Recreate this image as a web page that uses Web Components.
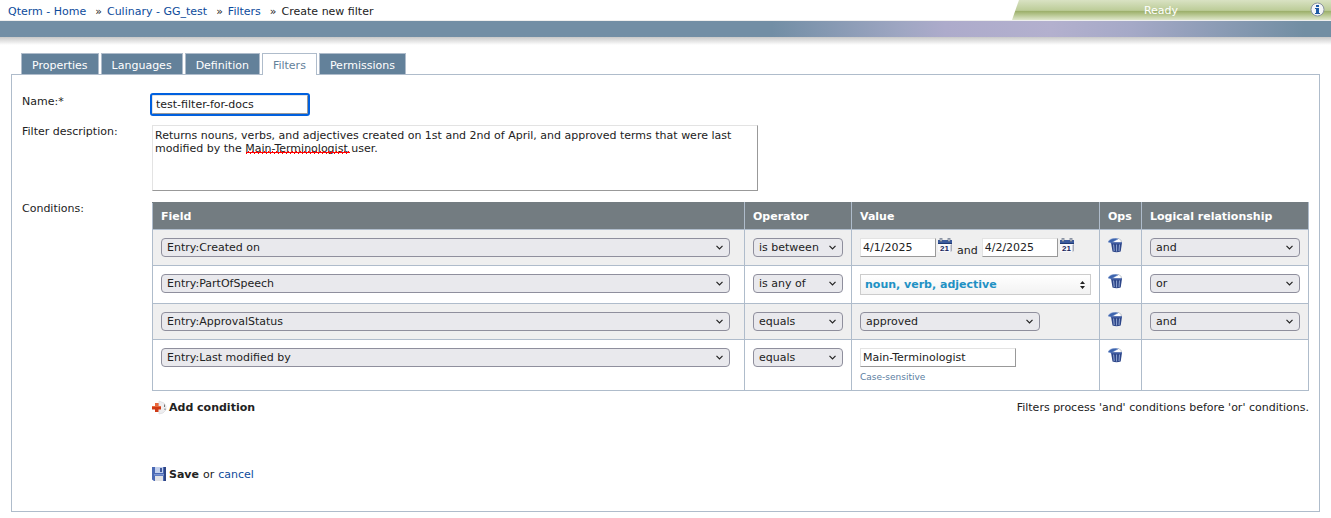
<!DOCTYPE html>
<html lang="en">
<head>
<meta charset="utf-8">
<title>Qterm - Create new filter</title>
<style>
  body {
    margin: 0;
    background: #fff;
    color: #222;
    font: 11px/13px "DejaVu Sans", Verdana, sans-serif;
  }
  main {
    padding: 8px 11px 0;
  }
</style>
</head>
<body>
<page-header>
  <a slot="crumb" href="#home">Qterm - Home</a>
  <a slot="crumb" href="#termbase">Culinary - GG_test</a>
  <a slot="crumb" href="#filters">Filters</a>
  <span slot="crumb">Create new filter</span>
  <span slot="status">Ready</span>
</page-header>
<main>
  <tab-panel>
    <tab-link slot="tab">Properties</tab-link>
    <tab-link slot="tab">Languages</tab-link>
    <tab-link slot="tab">Definition</tab-link>
    <tab-link slot="tab" selected>Filters</tab-link>
    <tab-link slot="tab">Permissions</tab-link>
    <filter-form></filter-form>
  </tab-panel>
</main>

<script>
const ICONS = {
  trash: `
    <path d="M4.500 4.500 L7 1.500 L11 .500 L13 2.500 L13.500 5 Z" fill="#fff" stroke="#9aa3b2" stroke-width=".7"/>
    <path d="M0 4 C1 1.500 4 .200 8 .200 L10 1 L3 5 Z" fill="#3d64ad" stroke="#7f9ad0" stroke-width=".5"/>
    <path d="M3 4.600 H14 L12.700 13.500 Q8.500 15 4.500 13.500 Z" fill="#2c4588"/>
    <path d="M3.200 5 H13.800" stroke="#4a6bb4" stroke-width="1"/>
    <path d="M5.600 6.500 L6.200 13 M8.600 6.500 V13.500 M11.500 6.500 L11 13" stroke="#9fb2da" stroke-width=".9"/>`,
  calendar: `
    <path d="M0 2 H14 V6 H0 Z" fill="#3a5a9e"/>
    <path d="M0 5 H14 V6 H0 Z" fill="#203a74"/>
    <path d="M2 0 H4 V3.500 H2 Z M10 0 H12 V3.500 H10 Z" fill="#c4c8d0" stroke="#526077" stroke-width=".6"/>
    <path d="M0 6 H14 L13 14 H0 Z" fill="#f8f8fb"/>
    <path d="M12.500 7 L14 6 V13 L12.500 14 Z" fill="#a9adba"/>
    <text x="2" y="13" font-size="8" font-weight="bold" fill="#16245a">21</text>`,
  add: `
    <path d="M7 1 L12 3 L14 6 V10 L11 13 L7 14 Z" fill="#eeeef0" stroke="#d5d5d8" stroke-width=".6"/>
    <path d="M12.500 4.500 V7 M13 8.500 V10" stroke="#777" stroke-width="1"/>
    <path d="M3 3 H6.500 V6 H9 V9.500 H6.500 V12 H3 V9.500 H0 V6 H3 Z" fill="#cf3a16"/>
    <path d="M3 3 H6 V6 H9 V7 H0 V6 H3 Z" fill="#e8683c"/>`,
  save: `
    <path d="M0 0 H14 V14 H2 L0 12.500 Z" fill="#4a69b4"/>
    <path d="M12 0 H14 V14 H12 Z" fill="#2e4584"/>
    <path d="M3 0 H11 V6 H3 Z" fill="#c3d0ec"/>
    <path d="M8 1 H10 V5 H8 Z" fill="#41599b"/>
    <path d="M2 7 H12 V8.500 H2 Z" fill="#7e97d2"/>
    <path d="M3 9 H11 V14 H3 Z" fill="#e4e4e6"/>`,
  info: `
    <circle cx="7.500" cy="7.500" r="6.500" fill="#f4f5f7" stroke="#8a94a0" stroke-width="1"/>
    <path d="M6 3 H9 V5 H6 Z M5 6 H9 V11 H10 V12 H5 V11 H6 V7 H5 Z" fill="#1f5aa5"/>`,
};

function attach(element, css, html) {
  const root = element.attachShadow({ mode: "open" });
  root.innerHTML = `<style>* { box-sizing: border-box; } ${css}</style>${html}`;
  return root;
}

class GlyphIcon extends HTMLElement {
  constructor() {
    super();
    attach(this, `
      :host { display: inline-block; width: 15px; height: 15px; flex: none; }
      svg { display: block; }
    `, `<svg width="15" height="15" viewBox="0 0 15 15" aria-hidden="true"></svg>`);
  }

  connectedCallback() {
    this.shadowRoot.querySelector("svg").innerHTML = ICONS[this.getAttribute("name")];
  }
}

class PageHeader extends HTMLElement {
  constructor() {
    super();
    attach(this, `
      :host { display: block; }
      .top { display: flex; justify-content: space-between; height: 20px; }
      nav { display: flex; padding: 5px 8px 0; gap: 9px; }
      ::slotted(a) { color: #0d4b9b; text-decoration: none; }
      ::slotted([slot="crumb"]:not(:first-child))::before {
        content: "»";
        color: #222;
        margin-right: 5px;
      }
      .status {
        display: grid;
        grid-template-columns: 1fr auto;
        align-items: center;
        width: 319px;
        padding: 1px 6px 0 0;
        color: #fff;
        text-align: center;
        clip-path: polygon(7px 0, 100% 0, 100% 100%, 0 100%);
        background: linear-gradient(#d9e2c3, #bccc98 52%, #9caf6b 56%, #a9bb7c 65%, #dfe7cc);
      }
      button { display: block; padding: 0; border: 0; background: none; }
      .bar {
        height: 17px;
        border-top: 1px solid #eee;
        background: linear-gradient(90deg, #728ea5 58%, #a0a7c3 68%, #adabcb 71%, #b3b0ce 79%, #a5a9c7 85%, #728ea3 98%);
      }
      .shade { height: 8px; background: linear-gradient(#c8c8c8, #fff); }
    `, `
      <div class="top">
        <nav aria-label="Breadcrumb"><slot name="crumb"></slot></nav>
        <div class="status">
          <slot name="status"></slot>
          <button type="button" aria-label="Information"><glyph-icon name="info"></glyph-icon></button>
        </div>
      </div>
      <div class="bar"></div>
      <div class="shade"></div>
    `);
  }
}

class TabLink extends HTMLElement {
  constructor() {
    super();
    attach(this, `
      :host { display: block; }
      a {
        display: block;
        height: 21px;
        padding: 5px 10px 0;
        border: 1px solid #afbccb;
        border-bottom: 0;
        background: #63819a;
        color: #fff;
        text-decoration: none;
      }
      :host([selected]) a {
        height: 22px;
        background: #fff;
        color: #63819a;
      }
    `, `<a href="#tab"><slot></slot></a>`);
  }
}

class TabPanel extends HTMLElement {
  constructor() {
    super();
    attach(this, `
      :host { display: block; }
      nav {
        position: relative;
        display: flex;
        gap: 2px;
        height: 21px;
        padding-left: 10px;
      }
      section {
        min-height: 437px;
        padding: 18px 10px 29px;
        border: 1px solid #afbccb;
      }
    `, `
      <nav><slot name="tab"></slot></nav>
      <section><slot></slot></section>
    `);
  }
}

class DropDown extends HTMLElement {
  constructor() {
    super();
    attach(this, `
      :host { display: block; position: relative; }
      select {
        display: block;
        appearance: none;
        width: 100%;
        height: 19px;
        padding: 0 20px 0 5px;
        border: 1px solid #8f8f9d;
        border-radius: 4px;
        background: #e9e9ed;
        color: #222;
        font: inherit;
      }
      svg { position: absolute; top: 7px; right: 7px; pointer-events: none; }
    `, `
      <select></select>
      <svg width="7" height="5" viewBox="0 0 7 5" aria-hidden="true">
        <path d="M.500 .800 L3.500 3.800 L6.500 .800" fill="none" stroke="#222" stroke-width="1.200"/>
      </svg>
    `);
  }

  connectedCallback() {
    const select = this.shadowRoot.querySelector("select");
    select.setAttribute("aria-label", this.getAttribute("label"));
    select.add(new Option(this.getAttribute("value")));
  }
}

class TextBox extends HTMLElement {
  constructor() {
    super();
    attach(this, `
      :host { display: block; width: 156px; }
      input {
        display: block;
        width: 100%;
        height: 19px;
        padding: 0 2px;
        border: 1px solid;
        border-color: #e3e3e3 #999 #999 #e3e3e3;
        border-radius: 0;
        background: #fff;
        color: #222;
        font: inherit;
      }
    `, `<input type="text">`);
  }

  connectedCallback() {
    const input = this.shadowRoot.querySelector("input");
    input.setAttribute("aria-label", this.getAttribute("label"));
    input.value = this.getAttribute("value");
  }
}

class DateRange extends HTMLElement {
  constructor() {
    super();
    attach(this, `
      :host { display: flex; }
      text-box { width: 76px; }
      button { display: block; height: 15px; padding: 0; border: 0; background: none; margin: 0 2px; }
      span { padding: 6px 4px 0 2px; line-height: 13px; }
    `, `
      <text-box label="From date" value="4/1/2025"></text-box>
      <button type="button" aria-label="Pick from date"><glyph-icon name="calendar"></glyph-icon></button>
      <span>and</span>
      <text-box label="To date" value="4/2/2025"></text-box>
      <button type="button" aria-label="Pick to date"><glyph-icon name="calendar"></glyph-icon></button>
    `);
  }
}

class MultiPick extends HTMLElement {
  constructor() {
    super();
    attach(this, `
      :host { display: block; }
      button {
        display: flex;
        align-items: center;
        justify-content: space-between;
        width: 100%;
        height: 21px;
        padding: 0 4px;
        border: 1px solid #ccc;
        background: linear-gradient(#fff, #f2f2f2);
        color: #2191c4;
        font: inherit;
        font-weight: bold;
      }
    `, `
      <button type="button" aria-haspopup="listbox">
        <slot></slot>
        <svg width="7" height="8" viewBox="0 0 7 8" aria-hidden="true">
          <path d="M1 3 L3.500 0 L6 3 Z M1 5 L3.500 8 L6 5 Z" fill="#222"/>
        </svg>
      </button>
    `);
  }
}

class ConditionTable extends HTMLElement {
  constructor() {
    super();
    const rows = [
      ["Entry:Created on", "is between", `<date-range></date-range>`, "and"],
      ["Entry:PartOfSpeech", "is any of", `<multi-pick>noun, verb, adjective</multi-pick>`, "or"],
      ["Entry:ApprovalStatus", "equals", `<drop-down class="status" label="Value" value="approved"></drop-down>`, "and"],
      ["Entry:Last modified by", "equals", `<text-box label="Value" value="Main-Terminologist"></text-box><small>Case-sensitive</small>`, ""],
    ];
    attach(this, `
      :host { display: block; }
      table { width: 100%; border-collapse: collapse; table-layout: fixed; }
      th, td { padding: 8px; border: 1px solid #afbccb; text-align: left; vertical-align: top; }
      th { padding: 7px 8px 6px; background: #737c81; color: #fff; border-top-color: #737c81; }
      tbody tr:nth-child(odd) { background: #efefef; }
      .field { width: auto; }
      .operator { width: 107px; }
      .value { width: 248px; }
      .ops { width: 42px; }
      .logic { width: 167px; }
      td:first-child { padding-right: 14px; }
      .status { width: 180px; }
      small { display: block; margin-top: 6px; font-size: 9px; line-height: 9px; color: #5c80a2; }
      button { display: block; padding: 0; border: 0; background: none; }
    `, `
      <table>
        <thead>
          <tr>
            <th class="field">Field</th>
            <th class="operator">Operator</th>
            <th class="value">Value</th>
            <th class="ops">Ops</th>
            <th class="logic">Logical relationship</th>
          </tr>
        </thead>
        <tbody>
          ${rows.map(([field, operator, value, logic]) => `
            <tr>
              <td><drop-down label="Field" value="${field}"></drop-down></td>
              <td><drop-down label="Operator" value="${operator}"></drop-down></td>
              <td>${value}</td>
              <td><button type="button" aria-label="Delete condition"><glyph-icon name="trash"></glyph-icon></button></td>
              <td>${logic && `<drop-down label="Logical relationship" value="${logic}"></drop-down>`}</td>
            </tr>`).join("")}
        </tbody>
      </table>
    `);
  }
}

class FilterForm extends HTMLElement {
  constructor() {
    super();
    attach(this, `
      :host { display: block; }
      form { display: grid; grid-template-columns: 130px minmax(0, 1fr); }
      label[for="name"] { padding-top: 2px; }
      input, textarea {
        display: block;
        border: 1px solid;
        border-color: #e3e3e3 #999 #999 #e3e3e3;
        border-radius: 0;
        background: #fff;
        color: #222;
        font: inherit;
      }
      input {
        width: 156px;
        height: 19px;
        margin: 2px 0 11px;
        padding: 0 3px;
        outline: 2px solid #0060df;
        border-radius: 1px;
      }
      .description { position: relative; width: 606px; margin-bottom: 11px; }
      textarea { width: 100%; height: 66px; padding: 3px 2px; resize: none; overflow: hidden; }
      .squiggle { position: absolute; left: 94px; top: 26px; }
      .footer, .actions { grid-column: 2; display: flex; align-items: center; }
      .footer { justify-content: space-between; padding-top: 9px; }
      .actions { padding-top: 52px; gap: 4px; }
      button {
        display: flex;
        align-items: center;
        gap: 2px;
        padding: 0;
        border: 0;
        background: none;
        color: #222;
        font: inherit;
        font-weight: bold;
      }
      a { color: #0d4b9b; text-decoration: none; }
    `, `
      <form>
        <label for="name">Name:*</label>
        <div><input id="name" type="text" value="test-filter-for-docs"></div>
        <label for="description">Filter description:</label>
        <div class="description">
          <textarea id="description" spellcheck="false">Returns nouns, verbs, and adjectives created on 1st and 2nd of April, and approved terms that were last modified by the Main-Terminologist user.</textarea>
          <svg class="squiggle" width="104" height="3" aria-hidden="true">
            <defs>
              <pattern id="wave" width="4" height="3" patternUnits="userSpaceOnUse">
                <path d="M0 1 H1 V3 H0 Z M1 1 H2 V2 H1 Z M2 0 H3 V2 H2 Z M3 1 H4 V2 H3 Z" fill="#f00"/>
              </pattern>
            </defs>
            <rect width="104" height="3" fill="url(#wave)"/>
          </svg>
        </div>
        <div>Conditions:</div>
        <condition-table></condition-table>
        <div class="footer">
          <button type="button"><glyph-icon name="add"></glyph-icon>Add condition</button>
          <span>Filters process 'and' conditions before 'or' conditions.</span>
        </div>
        <div class="actions">
          <button type="button"><glyph-icon name="save"></glyph-icon>Save</button>
          <span>or</span>
          <a href="#filters">cancel</a>
        </div>
      </form>
    `);
  }
}

customElements.define("glyph-icon", GlyphIcon);
customElements.define("page-header", PageHeader);
customElements.define("tab-link", TabLink);
customElements.define("tab-panel", TabPanel);
customElements.define("drop-down", DropDown);
customElements.define("text-box", TextBox);
customElements.define("date-range", DateRange);
customElements.define("multi-pick", MultiPick);
customElements.define("condition-table", ConditionTable);
customElements.define("filter-form", FilterForm);
</script>
</body>
</html>
